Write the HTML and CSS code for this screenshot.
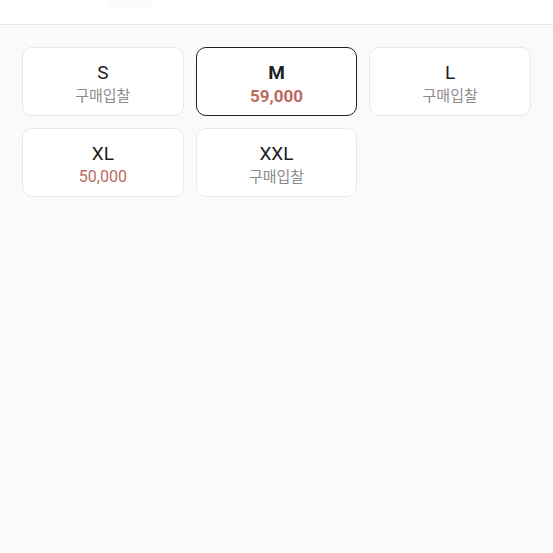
FILE: index.html
```html
<!DOCTYPE html>
<html lang="ko">
<head>
<meta charset="utf-8">
<title>사이즈 선택</title>
<link rel="stylesheet" href="styles.css">
</head>
<body>
  <header class="topbar">
    <div class="topbar-tab"></div>
  </header>
  <main class="sizes">
    <button class="size">
      <span class="size-name">S</span>
      <span class="size-sub">구매입찰</span>
    </button>
    <button class="size is-active">
      <span class="size-name">M</span>
      <span class="size-sub price">59,000</span>
    </button>
    <button class="size">
      <span class="size-name">L</span>
      <span class="size-sub">구매입찰</span>
    </button>
    <button class="size">
      <span class="size-name">XL</span>
      <span class="size-sub price">50,000</span>
    </button>
    <button class="size">
      <span class="size-name">XXL</span>
      <span class="size-sub">구매입찰</span>
    </button>
  </main>
</body>
</html>
```
FILE: styles.css
```css
* { box-sizing: border-box; }

html, body {
  margin: 0;
  height: 100%;
}

body {
  background: #fafafa;
  font-family: Roboto, "Noto Sans CJK KR", sans-serif;
  display: flex;
  flex-direction: column;
}

.topbar {
  height: 25px;
  background: #ffffff;
  border-bottom: 1px solid #e6e6e6;
  padding-left: 107px;
}

.topbar-tab {
  width: 45px;
  height: 8px;
  background: #fbfbfb;
}

.sizes {
  display: grid;
  grid-template-columns: repeat(3, 1fr);
  gap: 12px 12px;
  padding: 22px 22px;
}

.size {
  height: 69px;
  background: #ffffff;
  border: 1px solid #e8e8e8;
  border-radius: 10px;
  display: flex;
  flex-direction: column;
  align-items: center;
  justify-content: center;
  font-family: inherit;
  padding: 4px 0 0;
  gap: 2px;
}

.size-name {
  font-size: 19px;
  line-height: 22px;
  color: #1e1e1e;
}

.size-sub {
  font-size: 15px;
  line-height: 20px;
  color: #8c8c8c;
}

.price {
  color: #bb6a5f;
  font-size: 16px;
}

.is-active {
  border: 1.5px solid #1f1f1f;
}

.is-active .size-name {
  font-weight: 700;
}

.is-active .price {
  font-weight: 700;
  font-size: 17px;
}
```
